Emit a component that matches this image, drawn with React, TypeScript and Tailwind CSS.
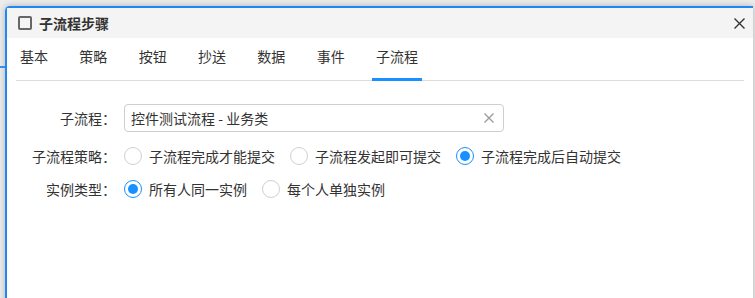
import { useState } from "react";

const tabs = ["基本", "策略", "按钮", "抄送", "数据", "事件", "子流程"];

function Radio({ checked, label, onClick }: { checked: boolean; label: string; onClick: () => void }) {
    return (
        <label className="flex items-center gap-[7px] cursor-pointer" onClick={onClick}>
            <span
                className={
                    checked
                        ? "w-[18px] h-[18px] rounded-full border border-[#1890ff] flex items-center justify-center bg-white"
                        : "w-[18px] h-[18px] rounded-full border border-[#d0d0d0] bg-white"
                }
            >
                {checked && <span className="w-[10px] h-[10px] rounded-full bg-[#1890ff]" />}
            </span>
            <span className="text-[14px] text-[#333]">{label}</span>
        </label>
    );
}

export default function App() {
    const [strategy, setStrategy] = useState(2);
    const [instance, setInstance] = useState(0);
    const [value, setValue] = useState("控件测试流程 - 业务类");

    return (
        <div
            className="relative w-[755px] h-[298px] overflow-hidden bg-[#ececec] pl-[5px] pt-[6px]"
            style={{ fontFamily: '"Noto Sans CJK SC", "Noto Sans", sans-serif' }}
        >
            <div className="absolute left-0 top-[66px] w-[5px] h-[2px] bg-[#3a8ee6]" />
            <div className="w-[748px] h-[300px] bg-white border-t-2 border-l-2 border-[#1e88f5] rounded-tl-[5px] shadow-[0_0_6px_rgba(0,0,0,0.25)]">
                {/* Title bar */}
                <div className="h-[30px] bg-[#f4f4f4] flex items-center pl-[11px] pr-[7px]">
                    <span className="w-[14px] h-[14px] border-2 border-[#666] rounded-[2px]" />
                    <span className="ml-[7px] text-[14px] font-bold text-[#333]">子流程步骤</span>
                    <button className="ml-auto w-[14px] h-[14px] flex items-center justify-center">
                        <svg width="11" height="11" viewBox="0 0 11 11">
                            <path d="M0.5 0.5 L10.5 10.5 M10.5 0.5 L0.5 10.5" stroke="#333" strokeWidth="1.4" />
                        </svg>
                    </button>
                </div>

                {/* Tabs */}
                <div className="mx-[9px] h-[43px] flex items-end gap-[23.33px] border-b border-[#dcdcdc]">
                    {tabs.map((t, i) => (
                        <div
                            key={t}
                            className={
                                i === tabs.length - 1
                                    ? "px-1 h-full flex items-center pb-[4px] border-b-[3px] border-[#1890ff] -mb-[1px] text-[14px] text-[#333]"
                                    : "px-1 h-full flex items-center pb-[4px] border-b-[3px] border-transparent -mb-[1px] text-[14px] text-[#333]"
                            }
                        >
                            {t}
                        </div>
                    ))}
                </div>

                {/* Form */}
                <div className="pt-[23px] flex flex-col">
                    <div className="flex items-center h-[28px]">
                        <div className="w-[109px] text-right text-[14px] text-[#333]">子流程：</div>
                        <div className="ml-[8px] w-[380px] h-[28px] border border-[#cfcfcf] rounded-[4px] flex items-center pl-[6px] pr-[9px]">
                            <input
                                className="flex-1 outline-none text-[14px] text-[#333] bg-transparent"
                                value={value}
                                onChange={e => setValue(e.target.value)}
                            />
                            <button onClick={() => setValue("")}>
                                <svg width="10" height="10" viewBox="0 0 10 10">
                                    <path d="M0.5 0.5 L9.5 9.5 M9.5 0.5 L0.5 9.5" stroke="#9a9a9a" strokeWidth="1.3" />
                                </svg>
                            </button>
                        </div>
                    </div>

                    <div className="flex items-center h-[28px] mt-[10px]">
                        <div className="w-[109px] text-right text-[14px] text-[#333]">子流程策略：</div>
                        <div className="ml-[8px] flex items-center gap-[15px]">
                            {["子流程完成才能提交", "子流程发起即可提交", "子流程完成后自动提交"].map((l, i) => (
                                <Radio key={l} label={l} checked={strategy === i} onClick={() => setStrategy(i)} />
                            ))}
                        </div>
                    </div>

                    <div className="flex items-center h-[28px] mt-[5px]">
                        <div className="w-[109px] text-right text-[14px] text-[#333]">实例类型：</div>
                        <div className="ml-[8px] flex items-center gap-[15px]">
                            {["所有人同一实例", "每个人单独实例"].map((l, i) => (
                                <Radio key={l} label={l} checked={instance === i} onClick={() => setInstance(i)} />
                            ))}
                        </div>
                    </div>
                </div>
            </div>
        </div>
    );
}
